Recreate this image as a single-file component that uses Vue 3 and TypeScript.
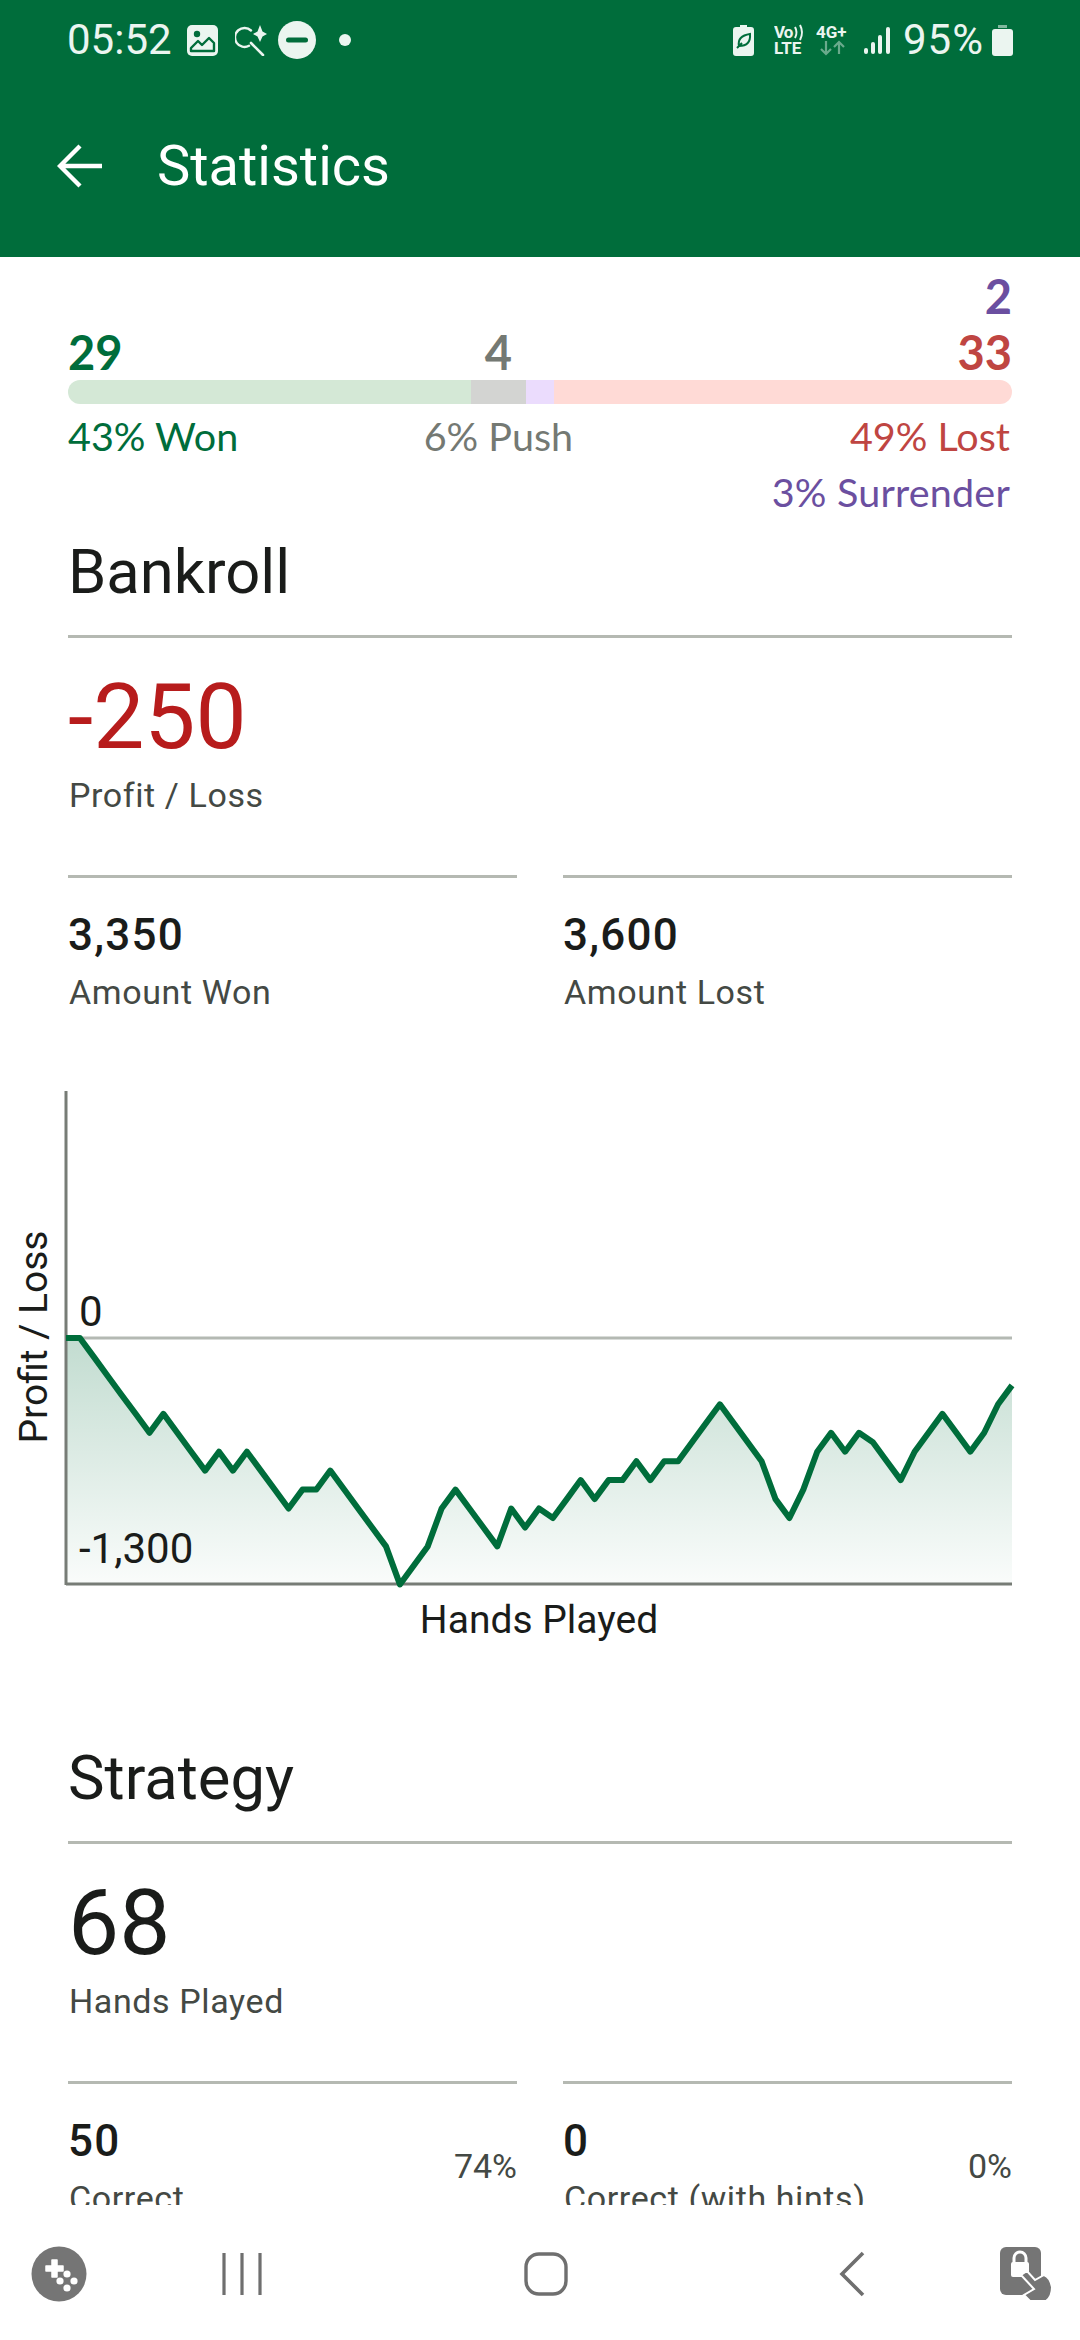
<script setup lang="ts">
const values: number[] = [
  0, 0, -1, -2, -3, -4, -5, -4, -5, -6, -7, -6, -7, -6, -7, -8, -9, -8, -8, -7,
  -8, -9, -10, -11, -13, -12, -11, -9, -8, -9, -10, -11, -9, -10, -9, -9.5, -8.5, -7.5, -8.5, -7.5,
  -7.5, -6.5, -7.5, -6.5, -6.5, -5.5, -4.5, -3.5, -4.5, -5.5, -6.5, -8.5, -9.5, -8, -6, -5, -6, -5, -5.5, -6.5,
  -7.5, -6, -5, -4, -5, -6, -5, -3.5, -2.5,
]
const left = 66
const stepX = 946 / 68
const zeroY = 252
const unitY = 18.95
const points = values.map((v, i) => `${(left + i * stepX).toFixed(1)},${(zeroY - v * unitY).toFixed(1)}`)
const line = points.join(' ')
const bottomY = zeroY + 13 * unitY
const area = `${left},${zeroY} ${line} ${left + 946},${bottomY} ${left},${bottomY}`
</script>

<template>
  <div class="screen">
    <header class="top">
      <div class="status">
        <div class="status-side">
          <span class="clock">05:52</span>
          <svg class="i-image" width="31" height="31" viewBox="0 0 31 31">
            <rect width="31" height="31" rx="5" fill="#ebf5f0" />
            <circle cx="10" cy="9" r="3.2" fill="#006d3b" />
            <path d="M4 23 L11 16 L15 20 L22 13 L27 18 V26 H4 Z" fill="none" stroke="#006d3b" stroke-width="2.4" stroke-linejoin="round" />
          </svg>
          <svg class="i-search" width="32" height="32" viewBox="0 0 32 32">
            <path d="M16 6.5 A9.5 9.5 0 1 0 14 21.8" fill="none" stroke="#ebf5f0" stroke-width="2.4" stroke-linecap="round" />
            <path d="M16 19 L28 31" stroke="#ebf5f0" stroke-width="2.6" stroke-linecap="round" />
            <path d="M25 1 L27.5 7.5 L32 10 L27.5 12.5 L25 18 L22.5 12.5 L18 10 L22.5 7.5 Z" fill="#ebf5f0" />
          </svg>
          <svg class="i-dnd" width="38" height="38" viewBox="0 0 38 38">
            <circle cx="19" cy="19" r="19" fill="#ebf5f0" />
            <rect x="8" y="16.5" width="22" height="5" rx="2.5" fill="#006d3b" />
          </svg>
          <span class="dot"></span>
        </div>
        <div class="status-side right">
          <svg class="i-eco" width="21" height="31" viewBox="0 0 21 31">
            <path d="M7 0 H14 V2 H18 Q21 2 21 5 V28 Q21 31 18 31 H3 Q0 31 0 28 V5 Q0 2 3 2 H7 Z" fill="#ebf5f0" />
            <path d="M4 23 L9 18 M6 21 Q4 11 17 9 Q18 21 6 21 Z" fill="none" stroke="#006d3b" stroke-width="2" />
          </svg>
          <svg class="i-volte" width="32" height="44" viewBox="0 -6 32 44">
            <text x="0" y="14" class="tiny vo">Vo</text>
            <path d="M21 3 Q24 8.500 21 14 M26 1 Q30 8.500 26 16" fill="none" stroke="#ebf5f0" stroke-width="2" />
            <text x="0" y="30" class="tiny">LTE</text>
          </svg>
          <svg class="i-net" width="36" height="44" viewBox="0 -6 36 44">
            <text x="0" y="14" class="tiny">4G+</text>
            <g fill="none" stroke="#ebf5f0" stroke-opacity=".45" stroke-width="2.2">
              <path d="M10 17 V30 M5 25 L10 30 L15 25" />
              <path d="M23 30 V18 M18 23 L23 18 L28 23" />
            </g>
          </svg>
          <svg class="i-signal" width="27" height="29" viewBox="0 0 27 29">
            <g fill="#ebf5f0">
              <rect x="0" y="22" width="4" height="6" rx="2" />
              <rect x="7" y="16" width="4" height="12" rx="2" />
              <rect x="14" y="9" width="4" height="19" rx="2" />
              <rect x="22" y="1" width="4" height="27" rx="2" />
            </g>
          </svg>
          <span class="clock pct">95%</span>
          <svg class="i-batt" width="21" height="31" viewBox="0 0 21 31">
            <path d="M6 0 H15 V3 H6 Z" fill="#ebf5f0" fill-opacity=".55" />
            <rect y="4" width="21" height="27" rx="3" fill="#ebf5f0" />
          </svg>
        </div>
      </div>
      <div class="appbar">
        <svg class="back" width="46" height="46" viewBox="0 0 46 46">
          <path d="M45 23 H3 M23 3 L3 23 L23 43" fill="none" stroke="#fff" stroke-width="4.4" />
        </svg>
        <h1>Statistics</h1>
      </div>
    </header>

    <main class="content">
      <section class="summary">
        <div class="surrender-count">2</div>
        <div class="tally counts">
          <span class="won strong">29</span>
          <span class="push strong mid">4</span>
          <span></span>
          <span class="lost strong end">33</span>
        </div>
        <div class="tally bar">
          <i class="seg-won"></i>
          <i class="seg-push"></i>
          <i class="seg-surr"></i>
          <i class="seg-lost"></i>
        </div>
        <div class="tally pcts">
          <span class="won">43% Won</span>
          <span class="push mid">6% Push</span>
          <span></span>
          <span class="lost end pad">49% Lost</span>
        </div>
        <div class="surrender-pct">3% Surrender</div>
      </section>

      <section class="section">
        <h2>Bankroll</h2>
        <div class="big-stat">
          <div class="big loss">-250</div>
          <div class="label">Profit / Loss</div>
        </div>
        <div class="pair">
          <div class="small-stat">
            <div class="num">3,350</div>
            <div class="label">Amount Won</div>
          </div>
          <div class="small-stat">
            <div class="num">3,600</div>
            <div class="label">Amount Lost</div>
          </div>
        </div>
      </section>

      <svg class="chart" width="1080" height="560" viewBox="0 0 1080 560">
        <defs>
          <linearGradient id="fillGrad" x1="0" y1="0" x2="0" y2="1">
            <stop offset="0" stop-color="#006d3b" stop-opacity=".24" />
            <stop offset="1" stop-color="#006d3b" stop-opacity=".02" />
          </linearGradient>
        </defs>
        <line x1="66" y1="252" x2="1012" y2="252" stroke="#b4b9b3" stroke-width="3" />
        <polygon :points="area" fill="url(#fillGrad)" />
        <line x1="66" y1="5" x2="66" y2="499" stroke="#777c76" stroke-width="3" />
        <line x1="66" y1="498" x2="1012" y2="498" stroke="#777c76" stroke-width="3" />
        <polyline :points="line" fill="none" stroke="#006d3b" stroke-width="6" stroke-linejoin="round" />
        <text x="79" y="240" class="axis num-label">0</text>
        <text x="79" y="477" class="axis num-label">-1,300</text>
        <text x="539" y="547" class="axis" text-anchor="middle">Hands Played</text>
        <text class="axis" text-anchor="middle" transform="translate(47 251) rotate(-90)">Profit / Loss</text>
      </svg>

      <section class="section strategy">
        <h2>Strategy</h2>
        <div class="big-stat">
          <div class="big">68</div>
          <div class="label">Hands Played</div>
        </div>
        <div class="pair">
          <div class="small-stat with-pct">
            <div>
              <div class="num">50</div>
              <div class="label">Correct</div>
            </div>
            <span class="pc">74%</span>
          </div>
          <div class="small-stat with-pct">
            <div>
              <div class="num">0</div>
              <div class="label">Correct (with hints)</div>
            </div>
            <span class="pc">0%</span>
          </div>
        </div>
      </section>
    </main>

    <nav class="nav">
      <svg class="n-game" width="56" height="56" viewBox="0 0 56 56">
        <circle cx="28" cy="28" r="27.5" fill="#757575" />
        <path d="M21 14 H26 V20 H32 V25 H26 V31 H21 V25 H15 V20 H21 Z" fill="#fff" stroke="#fff" stroke-width="1.5" stroke-linejoin="round" />
        <circle cx="36" cy="28" r="3.6" fill="#fff" />
        <circle cx="29" cy="35" r="3.6" fill="#fff" />
        <circle cx="43" cy="35" r="3.6" fill="#fff" />
        <circle cx="36" cy="42" r="3.6" fill="#fff" />
      </svg>
      <svg class="n-recent" width="40" height="44" viewBox="0 0 40 44">
        <path d="M2 1 V43 M20 1 V43 M38 1 V43" stroke="#6f6f6f" stroke-width="3.2" fill="none" />
      </svg>
      <svg class="n-home" width="44" height="44" viewBox="0 0 44 44">
        <rect x="2" y="2" width="40" height="40" rx="13" fill="none" stroke="#6f6f6f" stroke-width="3.4" />
      </svg>
      <svg class="n-back" width="26" height="46" viewBox="0 0 26 46">
        <path d="M24 2 L3 23 L24 44" fill="none" stroke="#6f6f6f" stroke-width="3.6" />
      </svg>
      <svg class="n-lock" width="52" height="54" viewBox="0 0 52 54">
        <rect x="0" y="0" width="41" height="48" rx="6" fill="#757575" />
        <path d="M14 16 V11 A6 6 0 0 1 26 11 V16" fill="none" stroke="#fff" stroke-width="3" />
        <rect x="11" y="15" width="18" height="15" rx="2" fill="#fff" />
        <path d="M21 28 L34 42 L24 48 L30 54 H46 Q52 50 52 40 Q50 30 44 28 L35 33 L27 24 Z" fill="#757575" stroke="#fff" stroke-width="2" />
      </svg>
    </nav>
  </div>
</template>

<style>
html,
body {
  margin: 0;
  background: #fff;
}
</style>

<style scoped>
.screen {
  width: 1080px;
  height: 2340px;
  display: flex;
  flex-direction: column;
  overflow: hidden;
  background: #fff;
  font-family: Roboto, "Noto Sans", sans-serif;
  color: #1a1c1a;
}
.top {
  height: 257px;
  flex: none;
  background: #006d3b;
}
.status {
  height: 80px;
  padding: 0 67px 0 67px;
  display: flex;
  justify-content: space-between;
  align-items: center;
}
.status-side {
  display: flex;
  align-items: center;
}
.clock {
  font-size: 42px;
  color: #ebf5f0;
  line-height: 44px;
}
.i-image {
  margin-left: 15px;
}
.i-search {
  margin-left: 17px;
}
.i-dnd {
  margin-left: 11px;
}
.dot {
  width: 12px;
  height: 12px;
  margin-left: 23px;
  border-radius: 50%;
  background: #ebf5f0;
}
.i-volte {
  margin-left: 20px;
}
.i-net {
  margin-left: 10px;
}
.i-signal {
  margin-left: 12px;
}
.pct {
  margin-left: 12px;
  letter-spacing: 1px;
}
.i-batt {
  margin-left: 8px;
}
.tiny {
  font: 700 17px Roboto, sans-serif;
  fill: #ebf5f0;
}
.vo {
  letter-spacing: -1px;
}
.appbar {
  height: 172px;
  padding-left: 57px;
  display: flex;
  align-items: center;
}
.appbar h1 {
  margin: 0 0 0 54px;
  font-size: 56px;
  font-weight: 400;
  line-height: 64px;
  color: #fff;
}
.content {
  flex: 1;
  min-height: 0;
  overflow: hidden;
}
.summary {
  padding: 11px 68px 0;
  font-family: Lato, sans-serif;
}
.tally {
  display: grid;
  grid-template-columns: minmax(0, 29fr) minmax(0, 4fr) minmax(0, 2fr) minmax(0, 33fr);
  white-space: nowrap;
}
.surrender-count,
.surrender-pct {
  text-align: right;
  color: #6b4fa0;
}
.surrender-pct {
  font-size: 39.5px;
  letter-spacing: 0.2px;
  line-height: 56px;
  padding-right: 2px;
}
.surrender-count {
  font-size: 47px;
  font-weight: 700;
  line-height: 57px;
}
.strong {
  font-size: 47px;
  font-weight: 700;
  line-height: 55px;
}
.counts {
  height: 55px;
}
.pcts {
  font-size: 39.5px;
  line-height: 56px;
  margin-top: 4px;
}
.mid {
  justify-self: center;
}
.end {
  justify-self: end;
}
.pad {
  padding-right: 2px;
}
.won {
  color: #006d3b;
}
.push {
  color: #747973;
}
.lost {
  color: #bf4542;
}
.bar {
  height: 24px;
  border-radius: 12px;
  overflow: hidden;
}
.seg-won {
  background: #d4e8d6;
}
.seg-push {
  background: #d3d4d2;
}
.seg-surr {
  background: #ebdcfd;
}
.seg-lost {
  background: #ffdad6;
}
.section {
  padding: 0 68px;
}
.section h2 {
  margin: 0;
  padding-top: 17px;
  height: 118px;
  box-sizing: border-box;
  font-size: 61.5px;
  font-weight: 400;
  line-height: 70px;
  border-bottom: 3px solid #b5b9b2;
}
.big-stat {
  padding-top: 26px;
  height: 237px;
  box-sizing: border-box;
}
.big {
  font-size: 91px;
  line-height: 106px;
}
.loss {
  color: #b71c1c;
}
.label {
  font-size: 34px;
  line-height: 50px;
  color: #444944;
  letter-spacing: 0.6px;
  padding-left: 1px;
  white-space: nowrap;
}
.pair {
  display: grid;
  grid-template-columns: 1fr 1fr;
  gap: 46px;
}
.small-stat {
  border-top: 3px solid #b5b9b2;
  padding-top: 31px;
}
.num {
  font-size: 44px;
  font-weight: 500;
  line-height: 52px;
  letter-spacing: 1.2px;
  margin-bottom: 6px;
}
.with-pct {
  display: flex;
  justify-content: space-between;
  align-items: flex-start;
}
.pc {
  font-size: 34px;
  line-height: 40px;
  color: #444944;
  margin-top: 31px;
}
.chart {
  display: block;
  margin-top: 69px;
}
.axis {
  font-family: Roboto, sans-serif;
  font-size: 39px;
  fill: #1a1c1a;
}
.num-label {
  font-size: 42px;
}
.strategy {
  margin-top: 80px;
}
.nav {
  flex: none;
  height: 135px;
  padding: 3px 0 0 0;
  display: flex;
  align-items: center;
  box-sizing: border-box;
  background: #fff;
}
.n-game {
  margin-left: 31px;
}
.n-recent {
  margin-left: 135px;
}
.n-home {
  margin-left: 262px;
}
.n-back {
  margin-left: 271px;
}
.n-lock {
  margin-left: 135px;
}
</style>
